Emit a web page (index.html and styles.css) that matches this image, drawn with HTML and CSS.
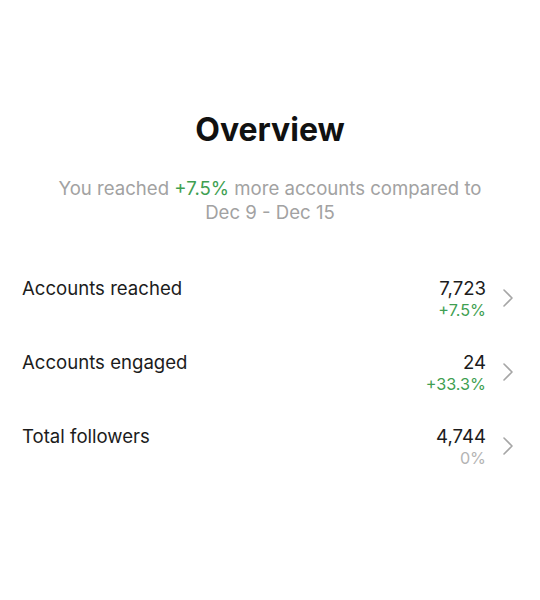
FILE: index.html
```html
<!DOCTYPE html>
<html>
<head>
<meta charset="utf-8">
<link rel="stylesheet" href="styles.css">
</head>
<body>
<main class="overview">
  <h1 class="title">Overview</h1>
  <p class="summary">You reached <span class="up">+7.5%</span> more accounts compared to<br>Dec 9 - Dec 15</p>
  <ul class="stats">
    <li class="row">
      <span class="label">Accounts reached</span>
      <span class="values"><span class="num">7,723</span><span class="pct up">+7.5%</span></span>
      <svg class="chev" viewBox="0 0 12 20" width="12" height="20"><path d="M2 2 L10 10 L2 18" /></svg>
    </li>
    <li class="row">
      <span class="label">Accounts engaged</span>
      <span class="values"><span class="num">24</span><span class="pct up">+33.3%</span></span>
      <svg class="chev" viewBox="0 0 12 20" width="12" height="20"><path d="M2 2 L10 10 L2 18" /></svg>
    </li>
    <li class="row">
      <span class="label">Total followers</span>
      <span class="values"><span class="num">4,744</span><span class="pct flat">0%</span></span>
      <svg class="chev" viewBox="0 0 12 20" width="12" height="20"><path d="M2 2 L10 10 L2 18" /></svg>
    </li>
  </ul>
</main>
</body>
</html>
```
FILE: styles.css
```css
html, body {
  margin: 0;
  padding: 0;
  background: #ffffff;
}
body {
  font-family: "Inter", "Liberation Sans", Arial, sans-serif;
  color: #1a1a1a;
}
.overview {
  padding-top: 110px;
}
.title {
  margin: 0;
  text-align: center;
  font-size: 32px;
  font-weight: 700;
  line-height: 40px;
  color: #111;
}
.summary {
  margin: 26px 0 0;
  text-align: center;
  font-size: 18.6px;
  line-height: 24px;
  color: #a2a2a2;
}
.up {
  color: #3f9f52;
}
.stats {
  list-style: none;
  margin: 50px 0 0;
  padding: 0 26px 0 22px;
}
.row {
  display: flex;
  align-items: center;
  height: 74px;
}
.label {
  flex: 1;
  align-self: flex-start;
  margin-top: 2px;
  font-size: 18.6px;
  line-height: 24px;
  color: #1c1c1c;
}
.values {
  display: flex;
  flex-direction: column;
  align-items: flex-end;
  align-self: flex-start;
  margin-top: 2px;
}
.num {
  font-size: 18.6px;
  line-height: 24px;
  color: #1c1c1c;
}
.pct {
  font-size: 16.2px;
  line-height: 20px;
}
.pct.flat {
  color: #b4b4b4;
}
.chev {
  align-self: flex-start;
  margin-top: 14px;
  margin-left: 16px;
}
.chev path {
  fill: none;
  stroke: #a6a6a6;
  stroke-width: 1.6;
  stroke-linecap: round;
  stroke-linejoin: round;
}
```
